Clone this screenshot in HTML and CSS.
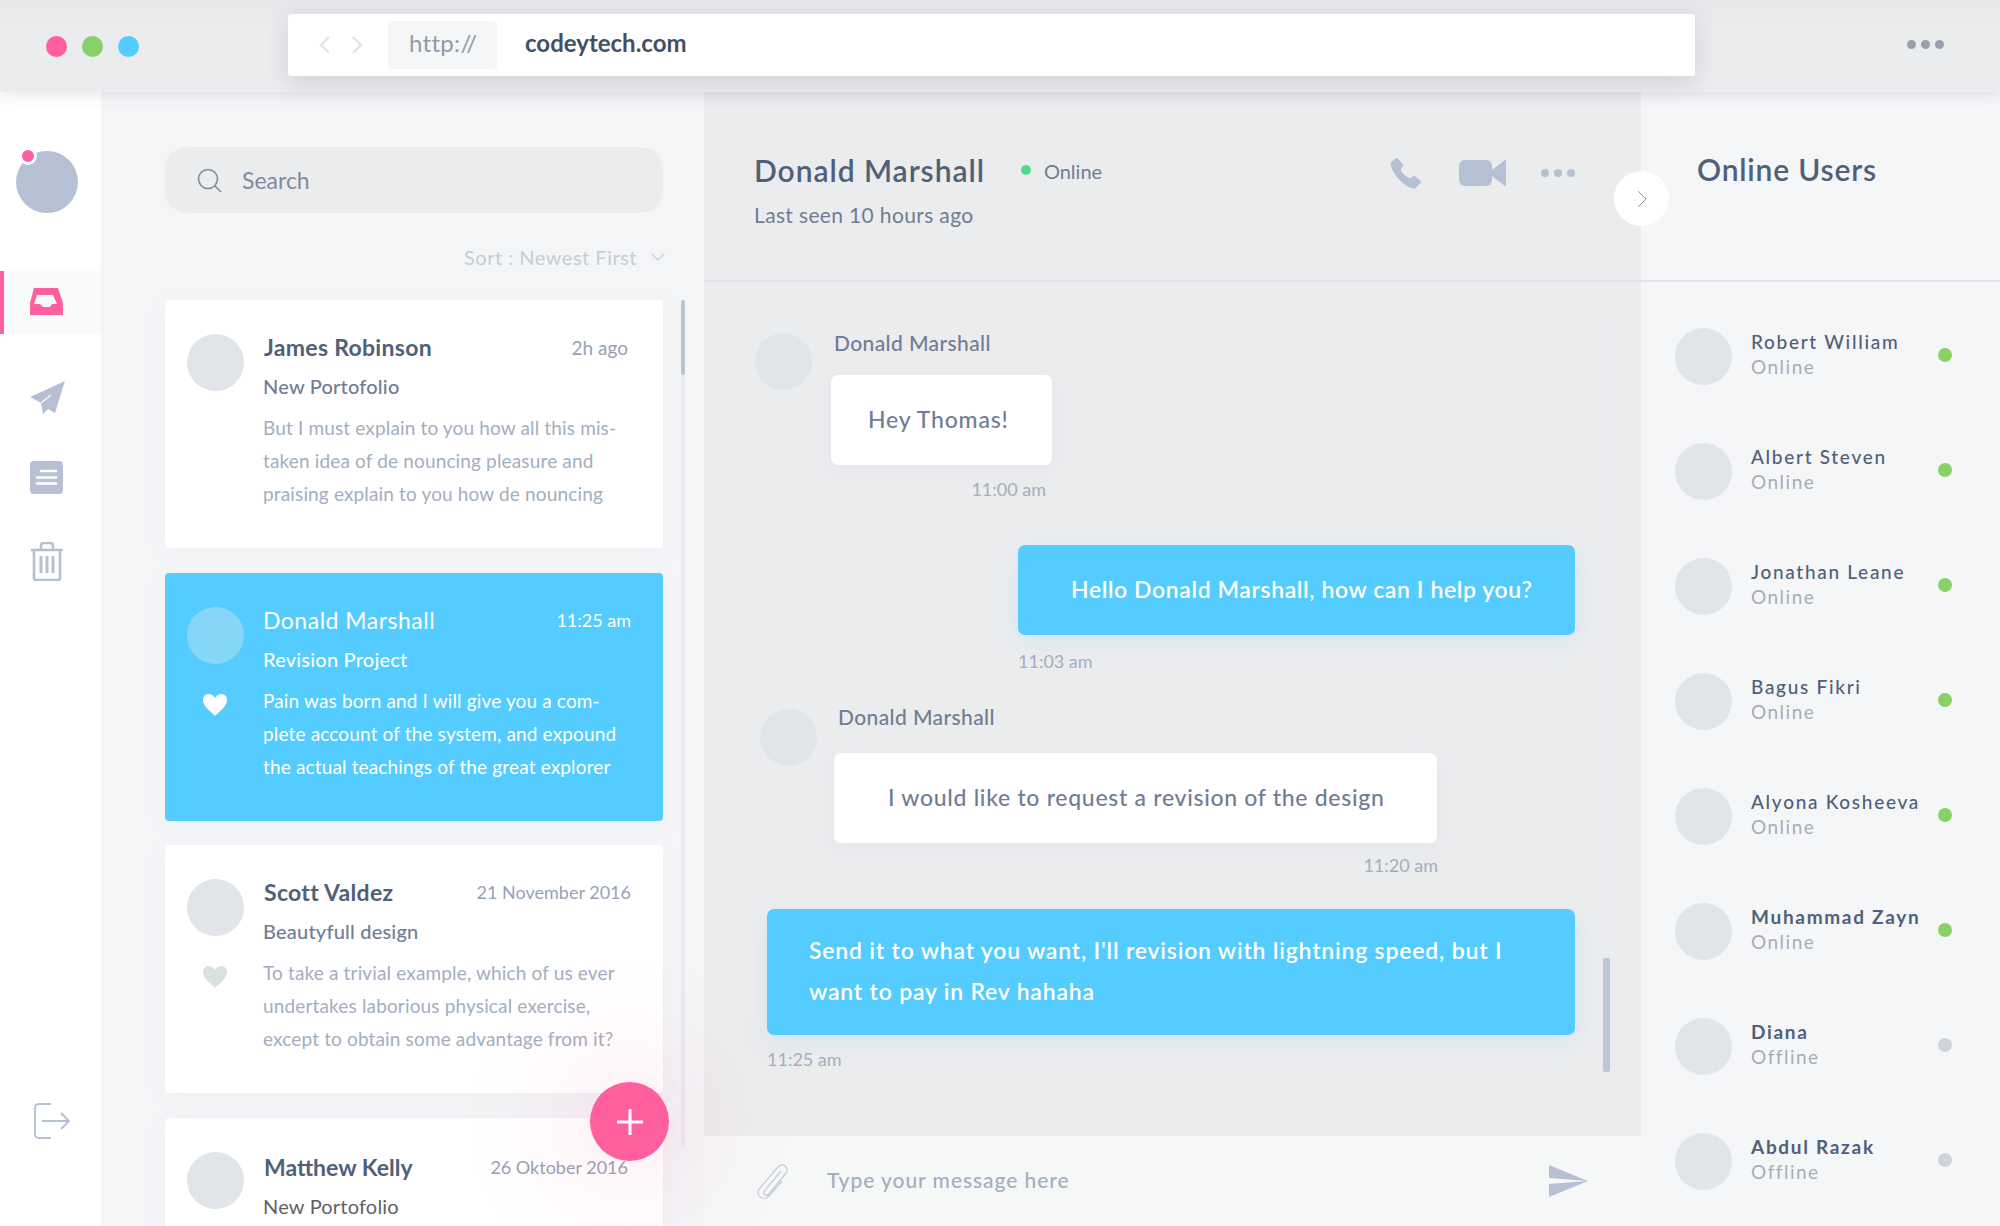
FILE: index.html
```html
<!DOCTYPE html>
<html lang="en">
<head>
    <meta charset="UTF-8">
    <meta name="viewport" content="width=device-width, initial-scale=1.0">
    <title>codeytech.com - Inbox</title>
    <link rel="stylesheet" href="styles.css">
</head>
<body>
    <header class="topbar">
        <div class="lights">
            <span class="light light-pink"></span>
            <span class="light light-green"></span>
            <span class="light light-blue"></span>
        </div>
        <div class="urlbar">
            <svg class="url-arrows" width="46" height="20" viewBox="0 0 46 20"><path d="M11 2 3 10l8 8M35 2l8 8-8 8"/></svg>
            <span class="url-scheme">http://</span>
            <span class="url-host">codeytech.com</span>
        </div>
        <div class="dots dots-top"><i></i><i></i><i></i></div>
    </header>

    <main class="app">
        <nav class="sidebar">
            <div class="me"><span class="me-badge"></span></div>
            <a class="nav-item active">
                <svg width="33" height="27" viewBox="0 0 33 27"><path fill="#ff5f9e" fill-rule="evenodd" d="M4 0h24l5 15v12H0V15ZM7 7 4 16h6l3 3h7l2-3h5l-4-9Z"/></svg>
            </a>
            <a class="nav-item">
                <svg width="35" height="33" viewBox="0 0 35 33"><path fill="#b5c1d2" d="M35 0 0 16l11 6 2 11 5-5 7 4Z"/><path stroke="#fff" stroke-width="1.2" d="m11 22 10-8"/></svg>
            </a>
            <a class="nav-item">
                <svg width="33" height="33" viewBox="0 0 33 33"><rect width="33" height="33" rx="4" fill="#b5c1d2"/><path stroke="#fff" stroke-width="2.6" stroke-linecap="round" d="M11 10h15M7 16.500h19M7 22.500h19"/></svg>
            </a>
            <a class="nav-item nav-trash">
                <svg width="34" height="39" viewBox="0 0 34 39" fill="none" stroke="#b5c1d2" stroke-width="2.600"><path d="M1 8h32M11 8V4q0-3 3-3h6q3 0 3 3v4M4 8v28q0 2 2 2h22q2 0 2-2V8"/><path d="M11 14v17M17 14v17M23 14v17" stroke-width="3"/></svg>
            </a>
            <svg class="logout" width="36" height="36" viewBox="0 0 36 36" fill="none" stroke="#b5c1d2" stroke-width="1.800"><path d="M17 1H5Q1 1 1 5v26q0 4 4 4h12M8 18h26M27 10l8 8-8 8"/></svg>
        </nav>

        <section class="threads">
            <div class="search">
                <svg width="25" height="25" viewBox="0 0 25 25" fill="none" stroke="#7f8ba0" stroke-width="1.600"><circle cx="11" cy="11" r="9.500"/><path d="m18 18 6 6"/></svg>
                <span>Search</span>
            </div>
            <div class="sort">
                <span>Sort : Newest First</span>
                <svg width="14" height="8" viewBox="0 0 14 8" fill="none" stroke="#c6ccd6" stroke-width="1.200"><path d="m1 1 6 6 6-6"/></svg>
            </div>

            <article class="card">
                <div class="card-side"><div class="avatar"></div></div>
                <div class="card-main">
                    <div class="card-head"><h3>James Robinson</h3><time>2h ago</time></div>
                    <h4>New Portofolio</h4>
                    <p>But I must explain to you how all this mis-<br>taken idea of de nouncing pleasure and<br>praising explain to you how de nouncing</p>
                </div>
            </article>

            <article class="card card-active">
                <div class="card-side">
                    <div class="avatar"></div>
                    <svg class="heart" width="24" height="22" viewBox="0 0 24 22"><path fill="#fff" d="M12 22C6 16 0 12 0 6c0-7 9-8 12-2 3-6 12-5 12 2 0 6-6 10-12 16Z"/></svg>
                </div>
                <div class="card-main">
                    <div class="card-head"><h3>Donald Marshall</h3><time class="time-num time-out">11:25 am</time></div>
                    <h4>Revision Project</h4>
                    <p>Pain was born and I will give you a com-<br>plete account of the system, and expound<br>the actual teachings of the great explorer</p>
                </div>
            </article>

            <article class="card">
                <div class="card-side">
                    <div class="avatar"></div>
                    <svg class="heart" width="24" height="22" viewBox="0 0 24 22"><path fill="#dbe1e0" d="M12 22C6 16 0 12 0 6c0-7 9-8 12-2 3-6 12-5 12 2 0 6-6 10-12 16Z"/></svg>
                </div>
                <div class="card-main">
                    <div class="card-head"><h3>Scott Valdez</h3><time class="time-num time-out">21 November 2016</time></div>
                    <h4>Beautyfull design</h4>
                    <p>To take a trivial example, which of us ever<br>undertakes laborious physical exercise,<br>except to obtain some advantage from it?</p>
                </div>
            </article>

            <article class="card card-last">
                <div class="card-side"><div class="avatar"></div></div>
                <div class="card-main">
                    <div class="card-head"><h3>Matthew Kelly</h3><time class="time-num">26 Oktober 2016</time></div>
                    <h4 class="plain">New Portofolio</h4>
                </div>
            </article>

            <div class="track list-track"><div class="thumb"></div></div>
        </section>

        <section class="chat">
            <div class="chat-head">
                <div>
                    <div class="chat-title">
                        <h2>Donald Marshall</h2>
                        <span class="status-dot"></span>
                        <span class="status">Online</span>
                    </div>
                    <div class="last-seen">Last seen 10 hours ago</div>
                </div>
                <div class="chat-tools">
                    <svg class="phone" width="32" height="32" viewBox="0 0 32 32"><path fill="#b5c1d2" stroke="#b5c1d2" stroke-linejoin="round" d="M7 1 1 6c0 8 12 24 23 25l2-1 5-5-7-6-4 3c-4-2-8-5-10-9l3-5Z"/></svg>
                    <svg width="47" height="26" viewBox="0 0 47 26"><rect width="33" height="26" rx="6" fill="#b5c1d2"/><path fill="#b5c1d2" d="M33 10 46 0h1v26h-1L33 16Z"/></svg>
                    <div class="dots dots-tools"><i></i><i></i><i></i></div>
                </div>
            </div>

            <div class="messages">
                <div class="msg msg-one">
                    <div class="avatar"></div>
                    <div class="msg-col">
                        <div class="msg-name">Donald Marshall</div>
                        <div class="bubble">Hey Thomas!</div>
                        <div class="msg-time align-right">11:00 am</div>
                    </div>
                </div>

                <div class="msg-mine msg-two">
                    <div class="bubble bubble-blue">Hello Donald Marshall, how can I help you?</div>
                    <div class="msg-time">11:03 am</div>
                </div>

                <div class="msg msg-three">
                    <div class="avatar"></div>
                    <div class="msg-col">
                        <div class="msg-name">Donald Marshall</div>
                        <div class="bubble">I would like to request a revision of the design</div>
                        <div class="msg-time align-right">11:20 am</div>
                    </div>
                </div>

                <div class="msg-mine msg-four">
                    <div class="bubble bubble-blue">Send it to what you want, I'll revision with lightning speed, but I<br>want to pay in Rev hahaha</div>
                    <div class="msg-time">11:25 am</div>
                </div>

                <div class="track chat-track"><div class="thumb"></div></div>
            </div>

            <div class="composer">
                <svg width="34" height="36" viewBox="0 0 34 36" fill="none" stroke="#c3ccd9" stroke-width="1.200"><path d="M25 8 9 27c-3 4 1 7 4 4L30 10c4-5-3-11-8-6L4 25c-6 7 3 14 9 8L26 18"/></svg>
                <span class="composer-text">Type your message here</span>
                <svg class="send" width="40" height="32" viewBox="0 0 40 32"><path fill="#b5c1d2" d="M0 0 39 16 0 13ZM0 19 39 16 0 32Z"/></svg>
            </div>
        </section>

        <aside class="people">
            <div class="people-head"><h2>Online Users</h2></div>
            <div class="people-list">
                <div class="person"><div class="avatar"></div><div class="person-info"><div class="person-name">Robert William</div><div class="person-state">Online</div></div><span class="presence on"></span></div>
                <div class="person"><div class="avatar"></div><div class="person-info"><div class="person-name">Albert Steven</div><div class="person-state">Online</div></div><span class="presence on"></span></div>
                <div class="person"><div class="avatar"></div><div class="person-info"><div class="person-name">Jonathan Leane</div><div class="person-state">Online</div></div><span class="presence on"></span></div>
                <div class="person"><div class="avatar"></div><div class="person-info"><div class="person-name">Bagus Fikri</div><div class="person-state">Online</div></div><span class="presence on"></span></div>
                <div class="person"><div class="avatar"></div><div class="person-info"><div class="person-name">Alyona Kosheeva</div><div class="person-state">Online</div></div><span class="presence on"></span></div>
                <div class="person"><div class="avatar"></div><div class="person-info"><div class="person-name bold">Muhammad Zayn</div><div class="person-state">Online</div></div><span class="presence on"></span></div>
                <div class="person"><div class="avatar"></div><div class="person-info"><div class="person-name bold">Diana</div><div class="person-state">Offline</div></div><span class="presence"></span></div>
                <div class="person"><div class="avatar"></div><div class="person-info"><div class="person-name bold">Abdul Razak</div><div class="person-state">Offline</div></div><span class="presence"></span></div>
            </div>
        </aside>

        <button class="toggle"><svg width="10" height="18" viewBox="0 0 10 18" fill="none" stroke="#8b8f96" stroke-width="0.900"><path d="m1 1 8 8-8 8"/></svg></button>
        <button class="fab"><svg width="26" height="26" viewBox="0 0 26 26"><path stroke="#fff" stroke-width="3" d="M13 0v26M0 13h26"/></svg></button>
    </main>
</body>
</html>
```
FILE: styles.css
```css
* {
    box-sizing: border-box;
}
html, body {
    height: 100%;
}
body {
    margin: 0;
    display: flex;
    flex-direction: column;
    overflow: hidden;
    font-family: Lato, "Noto Sans", sans-serif;
    color: #4f6079;
    background: #ebecee;
}
h2, h3, h4, p {
    margin: 0;
}

/* browser bar */
.topbar {
    position: relative;
    z-index: 5;
    flex: 0 0 92px;
    display: flex;
    align-items: center;
    padding: 0 56px 0 46px;
    background: linear-gradient(#e6e7e9, #ebecee 30%);
    box-shadow: 0 2px 14px rgba(60, 70, 90, 0.14);
}
.lights {
    display: flex;
    gap: 15px;
}
.light {
    width: 21px;
    height: 21px;
    border-radius: 50%;
}
.light-pink { background: #ff5f9e; }
.light-green { background: #88d068; }
.light-blue { background: #54ccff; }
.urlbar {
    display: flex;
    align-items: center;
    width: 1407px;
    height: 62px;
    margin: -2px 0 0 149px;
    padding-left: 30px;
    background: #fff;
    border-radius: 3px;
    box-shadow: 0 6px 22px rgba(60, 70, 90, 0.16);
}
.url-arrows {
    fill: none;
    stroke: #dfe2e6;
    stroke-width: 2;
}
.url-scheme {
    width: 109px;
    height: 48px;
    margin-left: 24px;
    padding-left: 21px;
    background: #f5f6f8;
    border-radius: 3px;
    font-size: 24px;
    letter-spacing: 0.3px;
    line-height: 43px;
    color: #929aa6;
}
.url-host {
    margin-left: 28px;
    margin-top: -6px;
    font-size: 24px;
    font-weight: 700;
    color: #435064;
}
.dots {
    display: flex;
}
.dots i {
    border-radius: 50%;
}
.dots-top {
    margin-left: auto;
    margin-top: -4px;
    gap: 5px;
}
.dots-top i {
    width: 9px;
    height: 9px;
    background: #97a0ac;
}
.dots-tools {
    gap: 5px;
}
.dots-tools i {
    width: 8px;
    height: 8px;
    background: #b5c1d2;
}

.app {
    position: relative;
    flex: 1;
    display: flex;
    min-height: 0;
    overflow: hidden;
}
.avatar {
    flex: 0 0 57px;
    width: 57px;
    height: 57px;
    border-radius: 50%;
    background: #e1e4e9;
}

/* left nav */
.sidebar {
    flex: 0 0 101px;
    display: flex;
    flex-direction: column;
    align-items: stretch;
    background: #fff;
}
.me {
    position: relative;
    width: 62px;
    height: 62px;
    margin: 59px 0 58px 16px;
    border-radius: 50%;
    background: #b5c1d2;
}
.me-badge {
    position: absolute;
    left: 3px;
    top: -4px;
    width: 18px;
    height: 18px;
    border-radius: 50%;
    background: #ff5f9e;
    border: 3px solid #fff;
}
.nav-item {
    display: flex;
    align-items: center;
    height: 63px;
    padding-left: 30px;
    margin-bottom: 17px;
}
.nav-item.active {
    background: #f9fafa;
    border-left: 4px solid #ff5f9e;
    padding: 0 0 2px 26px;
    margin-bottom: 32px;
}
.nav-trash {
    margin-top: 4px;
}
.logout {
    margin: auto 0 87px 34px;
}

/* thread list */
.threads {
    position: relative;
    flex: 0 0 603px;
    padding: 55px 41px 0 64px;
    background: #f4f5f7;
    overflow: hidden;
}
.search {
    display: flex;
    align-items: center;
    gap: 20px;
    height: 66px;
    padding-left: 32px;
    background: #ebecee;
    border-radius: 22px;
    font-size: 23px;
    color: #7f8ba0;
}
.sort {
    display: flex;
    align-items: center;
    justify-content: flex-end;
    gap: 14px;
    height: 87px;
    margin-right: -2px;
    font-size: 20px;
    letter-spacing: 0.5px;
    color: #c6ccd6;
}
.card {
    display: flex;
    height: 248px;
    margin-bottom: 25px;
    padding: 32px 0 0 22px;
    background: #fff;
    border-radius: 4px;
    box-shadow: 0 4px 24px rgba(120, 130, 150, 0.04);
}
.card-side {
    flex: 0 0 57px;
    padding-top: 2px;
}
.heart {
    display: block;
    margin: 30px 0 0 16px;
}
.card-main {
    flex: 1;
    padding: 0 35px 0 20px;
}
.card-head {
    display: flex;
    align-items: center;
    justify-content: space-between;
    height: 30px;
}
.card h3 {
    font-size: 23px;
    font-weight: 700;
    letter-spacing: 0.3px;
    color: #4f6079;
}
.card time {
    font-size: 19px;
    color: #97a2b6;
}
.card .time-num {
    font-size: 18px;
}
.card .time-out {
    margin-right: -3px;
}
.card h4 {
    margin: 9px 0 0 -1px;
    font-size: 20px;
    font-weight: 500;
    letter-spacing: 0.2px;
    line-height: 30px;
    color: #6f7d94;
}
.card h4.plain {
    color: #5f6164;
    font-weight: 400;
}
.card p {
    margin: 10px 0 0 -1px;
    font-size: 19px;
    letter-spacing: 0.15px;
    line-height: 33px;
    color: #a3aec0;
    white-space: nowrap;
}
.card-active {
    margin-bottom: 24px;
    background: #54ccff;
}
.card-active .avatar {
    background: #86d6f8;
}
.card-active h3, .card-active h4, .card-active p, .card-active time {
    color: #fff;
}
.card-active h3 {
    margin-left: -1px;
    font-weight: 400;
    letter-spacing: 0.5px;
}
.card-last .card-head {
    margin-top: 2px;
}
.card-last h3 {
    letter-spacing: 0;
}
.track {
    position: absolute;
    background: #e9ebee;
}
.list-track {
    top: 208px;
    left: 580px;
    width: 4px;
    height: 847px;
}
.thumb {
    position: absolute;
    left: 0;
    right: 0;
    background: #b9c3d1;
    border-radius: 2px;
}
.list-track .thumb {
    top: 0;
    height: 75px;
}

/* chat */
.chat {
    flex: 0 0 937px;
    display: flex;
    flex-direction: column;
    background: #ebecee;
}
.chat-head {
    flex: 0 0 190px;
    display: flex;
    justify-content: space-between;
    padding: 58px 66px 0 50px;
    border-bottom: 2px solid #e1e3e7;
}
.chat-title {
    display: flex;
    align-items: center;
    height: 40px;
}
.chat-title h2 {
    font-size: 30px;
    font-weight: 600;
    letter-spacing: 0.95px;
    color: #4f6079;
}
.status-dot {
    width: 10px;
    height: 10px;
    margin-left: 36px;
    border-radius: 50%;
    background: #4fdc8a;
}
.status {
    margin: 2px 0 0 13px;
    font-size: 20px;
    color: #6f7d94;
}
.last-seen {
    margin-top: 12px;
    font-size: 21px;
    letter-spacing: 0.35px;
    color: #6f7d94;
}
.chat-tools {
    display: flex;
    align-items: center;
    height: 32px;
    margin-top: 7px;
    gap: 35px;
}
.phone {
    margin-right: 2px;
}
.messages {
    position: relative;
    flex: 1;
    min-height: 0;
    padding: 50px 66px 0 50px;
    overflow: hidden;
}
.msg {
    display: flex;
}
.msg-col {
    display: flex;
    flex-direction: column;
}
.msg-name {
    height: 24px;
    margin-top: -1px;
    font-size: 21px;
    line-height: 24px;
    font-weight: 500;
    letter-spacing: 0.4px;
    color: #6f7d94;
}
.bubble {
    display: flex;
    align-items: center;
    height: 90px;
    margin-top: 20px;
    padding: 0 0 3px 37px;
    background: #fff;
    border-radius: 7px;
    font-size: 23px;
    letter-spacing: 0.8px;
    font-weight: 500;
    color: #6f7d94;
    box-shadow: 0 6px 20px rgba(120, 130, 150, 0.05);
}
.bubble-blue {
    margin-top: 0;
    background: #54ccff;
    color: #fff;
    font-weight: 600;
    box-shadow: 0 8px 20px rgba(84, 204, 255, 0.14);
}
.msg-time {
    margin-top: 12px;
    font-size: 18px;
    line-height: 24px;
    color: #a3aec0;
}
.align-right {
    text-align: right;
    padding-right: 6px;
}
.msg-one {
    margin-left: 1px;
}
.msg-one .avatar {
    margin-top: 1px;
}
.msg-one .msg-col {
    width: 224px;
    margin-left: 22px;
}
.msg-one .bubble {
    width: 221px;
    margin-left: -3px;
}
.msg-one .align-right {
    padding-right: 12px;
}
.msg-two {
    margin: 44px 0 0 264px;
}
.msg-two .bubble {
    padding-left: 53px;
    letter-spacing: 0.6px;
}
.msg-two .msg-time {
    margin-top: 14px;
}
.msg-three {
    margin: 33px 0 0 6px;
}
.msg-three .avatar {
    margin-top: 3px;
}
.msg-three .msg-col {
    margin-left: 21px;
    width: 604px;
}
.msg-three .bubble {
    width: 603px;
    margin-left: -4px;
    margin-top: 24px;
    padding-left: 54px;
    letter-spacing: 0.7px;
}
.msg-three .msg-time {
    margin-top: 10px;
    padding-right: 4px;
}
.msg-four {
    margin: 32px 0 0 13px;
}
.msg-four .bubble {
    height: 126px;
    padding-left: 42px;
    line-height: 41px;
}
.chat-track {
    top: 50px;
    left: 899px;
    width: 7px;
    height: 740px;
}
.chat-track .thumb {
    bottom: 0;
    height: 114px;
    background: #bcc6d3;
}
.composer {
    flex: 0 0 90px;
    display: flex;
    align-items: center;
    padding: 0 52px 0 52px;
    background: #f6f7f7;
}
.composer-text {
    margin: -4px 0 0 37px;
    font-size: 21px;
    font-weight: 500;
    letter-spacing: 0.95px;
    color: #a3aec0;
}
.send {
    margin-left: auto;
}

/* right column */
.people {
    flex: 1;
    display: flex;
    flex-direction: column;
    background: #f5f6f8;
}
.people-head {
    flex: 0 0 190px;
    padding: 59px 0 0 56px;
    border-bottom: 2px solid #e1e3e7;
}
.people-head h2 {
    font-size: 30px;
    font-weight: 600;
    letter-spacing: 0.8px;
    color: #4f6079;
}
.people-list {
    padding: 17px 48px 0 34px;
}
.person {
    display: flex;
    align-items: center;
    height: 115px;
}
.person-info {
    flex: 1;
    margin: -5px 0 0 19px;
}
.person-name {
    font-size: 19px;
    line-height: 25px;
    font-weight: 500;
    letter-spacing: 1.7px;
    color: #4f6079;
}
.person-name.bold {
    font-weight: 700;
}
.person-state {
    font-size: 19px;
    line-height: 25px;
    letter-spacing: 1.5px;
    color: #a9adb3;
}
.presence {
    width: 14px;
    height: 14px;
    margin-top: -4px;
    border-radius: 50%;
    background: #ced3dc;
}
.presence.on {
    background: #88d068;
}

/* floating bits */
.toggle {
    position: absolute;
    left: 1614px;
    top: 79px;
    width: 55px;
    height: 55px;
    padding: 0;
    border: none;
    border-radius: 50%;
    background: #fff;
    display: flex;
    align-items: center;
    justify-content: center;
}
.fab {
    position: absolute;
    left: 590px;
    top: 990px;
    width: 79px;
    height: 79px;
    padding: 0;
    border: none;
    border-radius: 50%;
    background: #ff5f9e;
    display: flex;
    align-items: center;
    justify-content: center;
    box-shadow: 0 0 110px 30px rgba(255, 95, 158, 0.13);
}
```
